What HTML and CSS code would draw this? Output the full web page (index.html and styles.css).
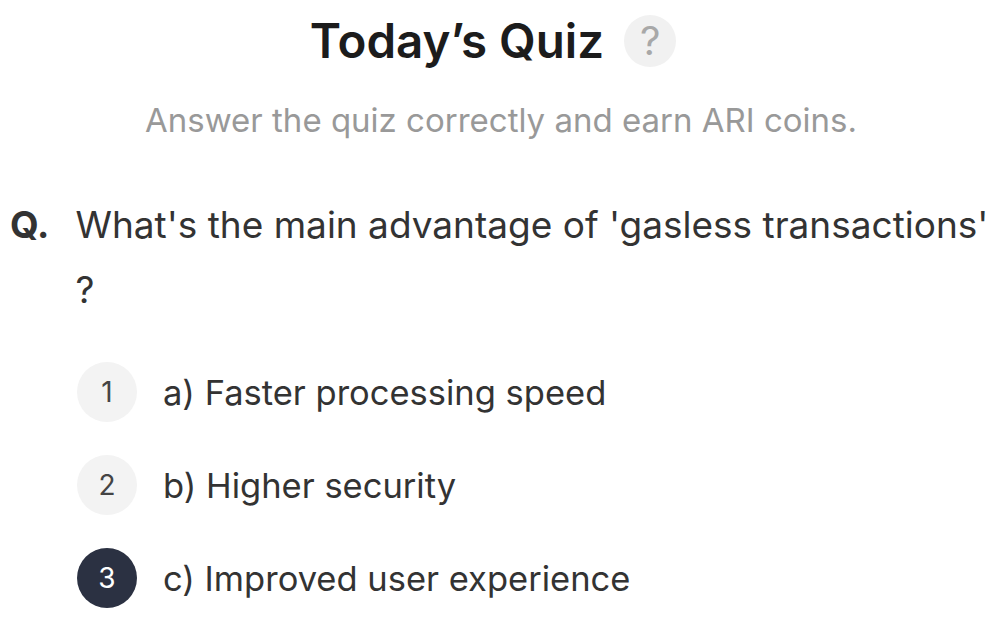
FILE: index.html
```html
<!DOCTYPE html>
<html lang="en">
  <head>
    <meta charset="UTF-8" />
    <meta name="viewport" content="width=device-width, initial-scale=1.0" />
    <title>Today's Quiz</title>
    <link rel="stylesheet" href="styles.css">
  </head>
  <body>
    <div class="container">
      <!-- Header -->
      <div class="quiz-header">
        <h1>Today’s Quiz <span class="help">?</span></h1>
        <p class="subtitle">Answer the quiz correctly and earn ARI coins.</p>
      </div>

      <!-- Question -->
      <div class="question">
        <span class="q-mark">Q.</span>
        <span class="q-text">What's the main advantage of 'gasless transactions' ?</span>
      </div>

      <!-- Options -->
      <ul class="options">
        <li><span class="num">1</span>a) Faster processing speed</li>
        <li><span class="num">2</span>b) Higher security</li>
        <li class="selected"><span class="num">3</span>c) Improved user experience</li>
      </ul>
    </div>
  </body>
</html>
```

FILE: styles.css
```css
body {
  font-family: Inter, "Noto Sans", sans-serif;
  background-color: #fff;
  color: #333;
  margin: 0;
  padding: 0;
}

.container {
  padding: 11px 8px 0 10px;
}

.quiz-header {
  text-align: center;
}

h1 {
  margin: 0;
  padding-right: 16px;
  font-size: 47.5px;
  font-weight: 600;
  color: #1c1c1c;
  line-height: 60px;
  display: flex;
  align-items: center;
  justify-content: center;
  gap: 20px;
}

.help {
  width: 52px;
  height: 52px;
  border-radius: 50%;
  background-color: #f1f1f1;
  color: #a8a8a8;
  font-size: 40px;
  font-weight: 400;
  display: flex;
  align-items: center;
  justify-content: center;
}

.subtitle {
  margin: 27px 0 0;
  font-size: 33px;
  color: #999;
  line-height: 44px;
}

.question {
  display: flex;
  gap: 26px;
  margin-top: 50px;
  font-size: 37px;
  line-height: 65px;
  color: #333;
}

.q-mark {
  font-weight: 700;
  flex-shrink: 0;
}

.options {
  list-style-type: none;
  padding: 0 0 0 67px;
  margin: 40px 0 0;
}

.options li {
  display: flex;
  align-items: center;
  gap: 26px;
  font-size: 34.5px;
  color: #333;
  height: 60px;
  margin-bottom: 33px;
}

.num {
  width: 60px;
  height: 60px;
  border-radius: 50%;
  background-color: #f3f3f3;
  color: #444;
  font-size: 28px;
  display: flex;
  align-items: center;
  justify-content: center;
  flex-shrink: 0;
}

.selected .num {
  background-color: #2b3142;
  color: #fff;
}
```
